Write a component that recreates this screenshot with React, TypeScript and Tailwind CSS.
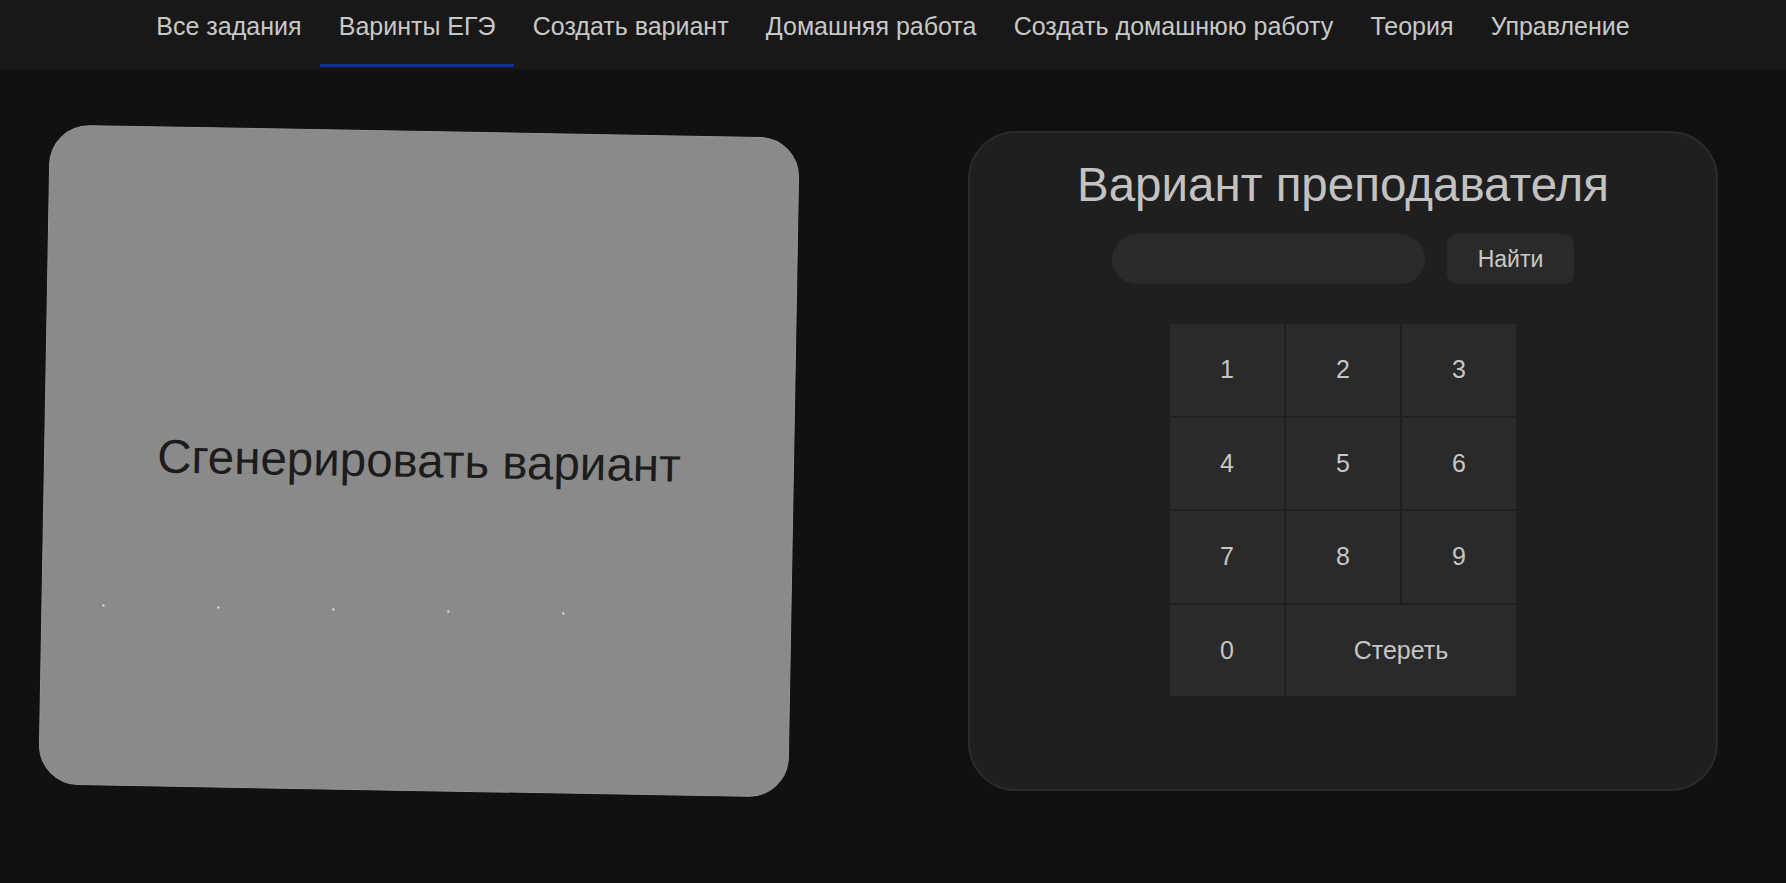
import React from "react";

const navItems = [
  "Все задания",
  "Варинты ЕГЭ",
  "Создать вариант",
  "Домашняя работа",
  "Создать домашнюю работу",
  "Теория",
  "Управление",
];

const keys = ["1", "2", "3", "4", "5", "6", "7", "8", "9"];

export default function App() {
  return (
    <div
      className="min-h-[883px] w-full bg-[#111111] overflow-hidden"
      style={{ fontFamily: '"Liberation Sans", Arial, sans-serif' }}
    >
      <nav className="h-[69px] bg-[#181818] flex justify-center">
        {navItems.map((item, i) => (
          <div
            key={item}
            className={
              "h-[67px] px-[18.6px] pt-[12px] text-[25px] leading-[29px] text-[#c8c8c8] border-b-[3px] " +
              (i === 1 ? "border-[#10309a]" : "border-transparent")
            }
          >
            {item}
          </div>
        ))}
      </nav>

      <main className="flex justify-between px-[68px] pt-[62px]">
        <div className="w-[750px] h-[660px] rounded-[40px] bg-[#8a8a8a] border border-[#959595] relative flex items-center justify-center translate-x-[-24px] rotate-[1deg]">
          <span className="text-[47.5px] text-[#1c1c1c] leading-none">Сгенерировать вариант</span>
          {[60, 175, 290, 405, 520].map((x) => (
            <span
              key={x}
              className="absolute top-[478px] w-[2px] h-[2px] bg-[#e5e5e5]"
              style={{ left: x }}
            />
          ))}
        </div>

        <div className="w-[750px] h-[660px] rounded-[48px] bg-[#1f1f1f] border-2 border-[#2b2b2b] flex flex-col items-center pt-[24px]">
          <h1 className="text-[47.5px] leading-[55px] text-[#c2c2c2]">Вариант преподавателя</h1>
          <div className="flex items-center gap-[22px] mt-[22px]">
            <div className="w-[313px] h-[50px] rounded-full bg-[#2a2a2a]" />
            <button className="w-[127px] h-[50px] rounded-[10px] bg-[#2a2a2a] text-[23px] text-[#c8c8c8]">
              Найти
            </button>
          </div>
          <div className="mt-[40px] grid grid-cols-[114px_114px_114px] grid-rows-[92px_91px_92px_91px] gap-[2px]">
            {keys.map((k) => (
              <div
                key={k}
                className="bg-[#2a2a2a] flex items-center justify-center text-[25px] text-[#c6c6c6]"
              >
                {k}
              </div>
            ))}
            <div className="bg-[#2a2a2a] flex items-center justify-center text-[25px] text-[#c6c6c6]">0</div>
            <div className="col-span-2 bg-[#2a2a2a] flex items-center justify-center text-[25px] text-[#c6c6c6]">
              Стереть
            </div>
          </div>
        </div>
      </main>
    </div>
  );
}
